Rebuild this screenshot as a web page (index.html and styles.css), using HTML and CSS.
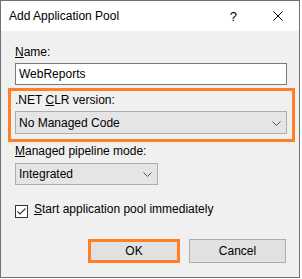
FILE: index.html
```html
<!DOCTYPE html>
<html lang="en">
<head>
    <meta charset="UTF-8">
    <meta name="viewport" content="width=device-width, initial-scale=1.0">
    <title>Add Application Pool</title>
    <link rel="stylesheet" href="styles.css">
</head>
<body>
    <div class="window">
        <div class="titlebar">
            <span class="title">Add Application Pool</span>
            <span class="help">?</span>
            <span class="close">
                <svg width="10" height="10" viewBox="0 0 10 10">
                    <path d="M0.5 0.5 L9.5 9.5 M9.5 0.5 L0.5 9.5" stroke="#000" stroke-width="1" fill="none"/>
                </svg>
            </span>
        </div>

        <div class="content">
            <div class="field-label"><u>N</u>ame:</div>
            <div class="textbox">WebReports</div>

            <div class="highlight">
                <div class="field-label">.NET <u>C</u>LR version:</div>
                <div class="select">
                    <span>No Managed Code</span>
                    <svg class="chevron" width="9" height="5" viewBox="0 0 9 5">
                        <path d="M0.5 0.5 L4.5 4.5 L8.5 0.5" stroke="#555" stroke-width="1" fill="none"/>
                    </svg>
                </div>
            </div>

            <div class="field-label pipeline-label"><u>M</u>anaged pipeline mode:</div>
            <div class="select narrow">
                <span>Integrated</span>
                <svg class="chevron" width="9" height="5" viewBox="0 0 9 5">
                    <path d="M0.5 0.5 L4.5 4.5 L8.5 0.5" stroke="#555" stroke-width="1" fill="none"/>
                </svg>
            </div>

            <div class="check-row">
                <span class="checkbox">
                    <svg width="11" height="11" viewBox="0 0 11 11">
                        <path d="M1.5 5.5 L4 8 L9.5 2.5" stroke="#333" stroke-width="1.1" fill="none"/>
                    </svg>
                </span>
                <span><u>S</u>tart application pool immediately</span>
            </div>

            <div class="buttons">
                <button class="btn ok">OK</button>
                <button class="btn cancel">Cancel</button>
            </div>
        </div>
    </div>
</body>
</html>
```

FILE: styles.css
```css
body {
    margin: 0;
    padding: 0;
    font-family: "Liberation Sans", Arial, sans-serif;
    font-size: 12px;
    color: #000;
    background-color: #fff;
}

.window {
    box-sizing: border-box;
    width: 300px;
    height: 278px;
    border: 1px solid #707070;
    background-color: #f0f0f0;
}

.titlebar {
    display: flex;
    align-items: center;
    height: 30px;
    background-color: #fff;
}

.title {
    margin-left: 8px;
    flex: 1;
}

.help {
    margin-right: 36px;
    font-size: 13px;
}

.close {
    display: flex;
    margin-right: 16px;
}

.content {
    padding: 14px 12px 0 14px;
}

.field-label {
    line-height: 15px;
    margin-bottom: 3px;
}

.textbox {
    box-sizing: border-box;
    display: flex;
    align-items: center;
    height: 22px;
    padding-left: 3px;
    border: 1px solid #7a7a7a;
    background-color: #fff;
}

.highlight {
    margin: 3px -8px 0 -7px;
    padding: 2px 5px 5px 4px;
    border: 3px solid #ff7f27;
}

.select {
    box-sizing: border-box;
    display: flex;
    align-items: center;
    justify-content: space-between;
    height: 23px;
    padding: 0 5px 0 3px;
    border: 1px solid #adadad;
    background-color: #e5e5e5;
}

.select.narrow {
    width: 143px;
    height: 22px;
    margin-top: 4px;
}

.chevron {
    margin-top: 1px;
}

.pipeline-label {
    margin-top: 2px;
    margin-bottom: 0;
}

.check-row {
    display: flex;
    align-items: flex-start;
    height: 15px;
    line-height: 15px;
    margin-top: 17px;
}

.checkbox {
    box-sizing: border-box;
    display: flex;
    align-items: center;
    justify-content: center;
    width: 13px;
    height: 13px;
    margin-top: 3px;
    margin-right: 6px;
    border: 1px solid #333;
    background-color: #fff;
}

.buttons {
    display: flex;
    justify-content: flex-end;
    gap: 9px;
    margin-top: 22px;
    margin-right: 1px;
}

.btn {
    box-sizing: border-box;
    height: 24px;
    padding: 0;
    font-family: inherit;
    font-size: 12px;
    color: #000;
    background-color: #e1e1e1;
    border: 1px solid #adadad;
}

.btn.ok {
    width: 92px;
    border: 3px solid #ff7f27;
}

.btn.cancel {
    width: 97px;
}
```
